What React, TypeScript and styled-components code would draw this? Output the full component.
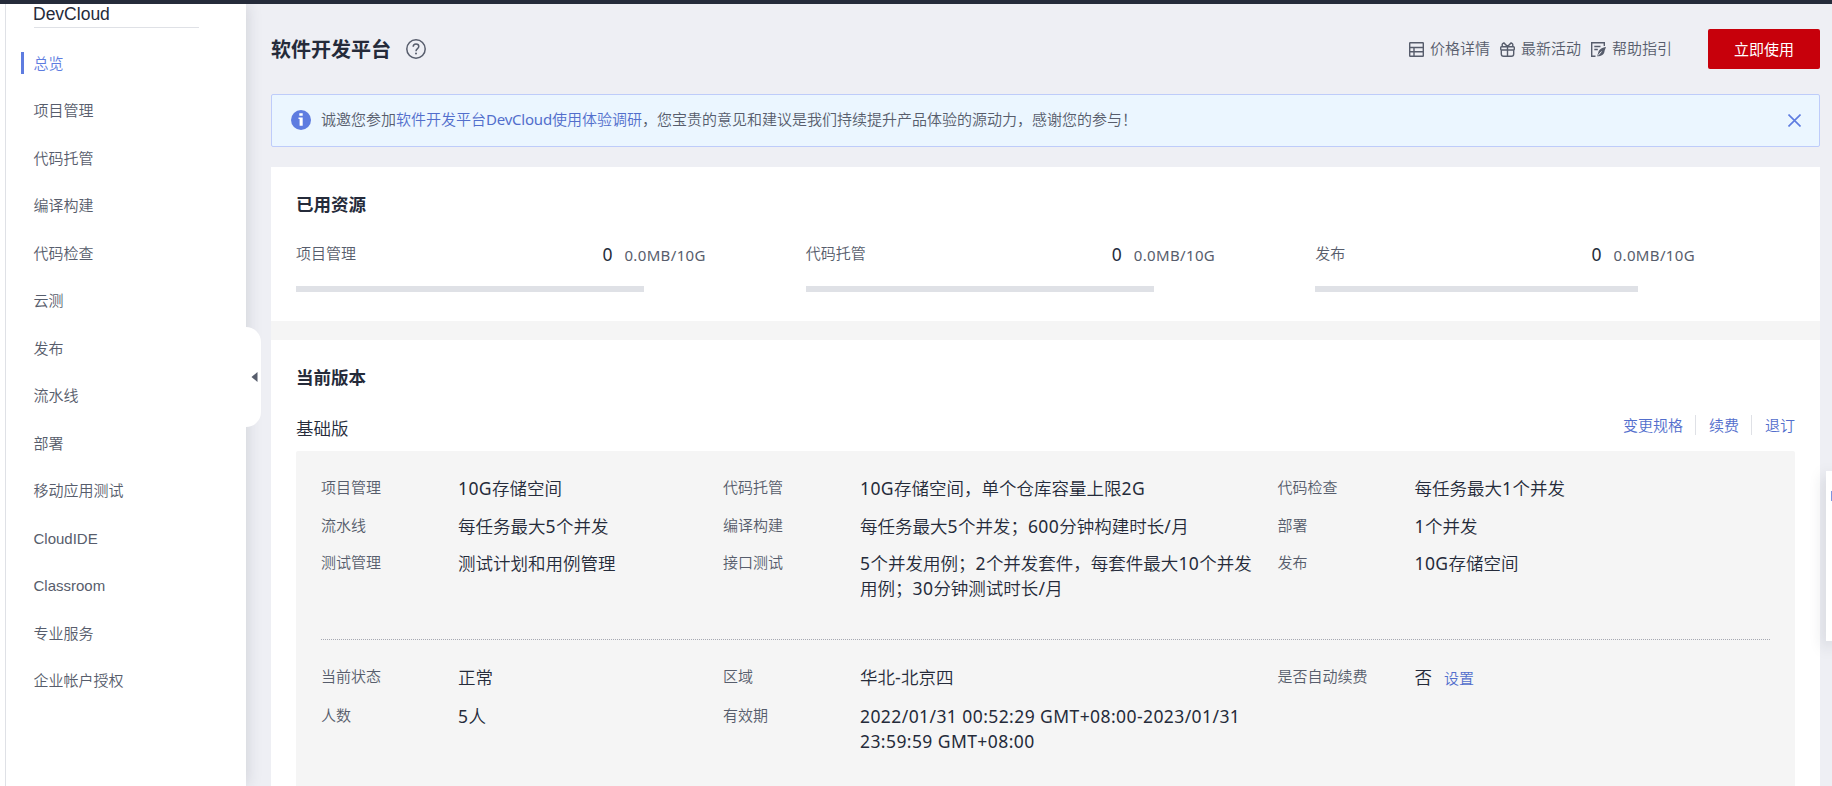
import React from "react";
import styled, { createGlobalStyle } from "styled-components";

const Global = createGlobalStyle`
  * { box-sizing: border-box; }
  html, body { margin: 0; height: 100%; overflow: hidden; }
  body {
    font-family: "Noto Sans", "Noto Sans CJK SC", sans-serif;
    font-size: 15px;
    font-weight: 350;
    color: #575d6c;
    background: #eeeff4;
  }
  ul { list-style: none; margin: 0; padding: 0; }
  h1, h2, h3, p { margin: 0; }
  a { color: #526ecc; text-decoration: none; }
`;

const Page = styled.div`
  height: 786px;
  display: flex;
  border-top: 4px solid #252b3a;
  overflow: hidden;
`;

const Sidebar = styled.nav`
  position: relative;
  z-index: 2;
  width: 246px;
  flex: none;
  background: #fff;
  box-shadow: 0 0 15px rgba(37, 43, 58, 0.17);
  padding-left: 5px;
  font-family: "Liberation Sans", "Noto Sans CJK SC", sans-serif;
`;

const SidebarBody = styled.div`
  height: 100%;
  border-left: 1px solid #dfe1e6;
  padding-left: 15px;
`;

const Brand = styled.div`
  width: 165px;
  height: 24px;
  margin-left: 13px;
  border-bottom: 1px solid #dfe1e6;
  color: #252b3a;
  font-size: 17.5px;
  font-weight: 400;
  line-height: 20px;
  text-indent: -1px;
`;

const Menu = styled.ul`
  padding-top: 11.5px;
`;

const MenuItem = styled.li<{ $active?: boolean; $latin?: boolean }>`
  height: 47.5px;
  display: flex;
  align-items: center;
  gap: 9.5px;
  padding-bottom: ${(p) => (p.$latin ? 0 : 2)}px;
  color: ${(p) => (p.$active ? "#5e7ce0" : "#575d6c")};
  &::before {
    content: "";
    width: 3px;
    height: 22px;
    margin-top: 2px;
    background: ${(p) => (p.$active ? "#5e7ce0" : "transparent")};
  }
`;

const Handle = styled.button`
  position: absolute;
  left: 246px;
  top: 323px;
  width: 15px;
  height: 100px;
  padding: 0 0 0 5px;
  border: 0;
  border-radius: 0 15px 15px 0;
  background: #fff;
  display: flex;
  align-items: center;
`;

const Main = styled.main`
  flex: 1;
  min-width: 0;
  padding: 0 12px 0 25px;
`;

const Header = styled.header`
  height: 90px;
  display: flex;
  align-items: center;
`;

const Title = styled.h1`
  color: #252b3a;
  font-size: 20px;
  font-weight: 700;
  line-height: 30px;
  padding-top: 1px;
  margin-right: 15px;
`;

const HeaderLinks = styled.div`
  margin-left: auto;
  display: flex;
  gap: 10px;
`;

const HeaderLink = styled.span`
  display: flex;
  align-items: center;
  gap: 6px;
  line-height: 22px;
  padding-bottom: 2px;
  svg { position: relative; top: 1px; }
`;

const UseButton = styled.button`
  width: 112px;
  height: 40px;
  margin-left: 36px;
  padding: 0 0 2px;
  border: 0;
  border-radius: 2px;
  background: #c7000b;
  color: #fff;
  font: inherit;
  font-weight: 400;
`;

const Banner = styled.div`
  height: 53px;
  display: flex;
  align-items: center;
  padding: 0 18px 1px 19px;
  border: 1px solid #beccfa;
  border-radius: 2px;
  background: #ebf6ff;
`;

const BannerText = styled.p`
  flex: 1;
  margin-left: 10px;
  line-height: 22px;
  padding-bottom: 2px;
`;

const Section = styled.section<{ $height?: number }>`
  height: ${(p) => (p.$height ? `${p.$height}px` : "auto")};
  background: #fff;
  padding: 24px 25px 0;
`;

const Cards = styled.div`
  margin-top: 20px;
  display: flex;
  flex-direction: column;
  gap: 19px;
  background: #f5f5f5;
`;

const SectionTitle = styled.h2`
  color: #252b3a;
  font-size: 17.5px;
  font-weight: 700;
  line-height: 26px;
`;

const Usages = styled.div`
  margin-top: 23px;
  display: flex;
  gap: 100px;
  padding-right: 100px;
`;

const Usage = styled.div<{ $width: number }>`
  width: ${(p) => p.$width}px;
`;

const UsageRow = styled.div`
  display: flex;
  height: 30px;
  line-height: 30px;
`;

const UsageName = styled.span`
  line-height: 27px;
`;

const UsageCount = styled.span`
  margin-left: auto;
  margin-right: 12px;
  color: #252b3a;
  font-size: 17.5px;
  font-weight: 400;
  line-height: 28px;
`;

const UsageTrack = styled.div`
  width: 85%;
  height: 6px;
  margin-top: 16px;
  background: #dfe1e6;
`;

const PlanRow = styled.div`
  display: flex;
  align-items: center;
  justify-content: space-between;
  margin-top: 23px;
  height: 28px;
`;

const PlanName = styled.h3`
  color: #252b3a;
  font-size: 17.5px;
  font-weight: 350;
`;

const Actions = styled.div`
  display: flex;
  align-items: center;
  line-height: 20px;
  margin-top: -4px;
  a + a {
    margin-left: 12px;
    padding-left: 13px;
    border-left: 1px solid #dfe1e6;
  }
`;

const Panel = styled.div`
  height: 400px;
  margin-top: 10px;
  padding: 24px 25px;
  border-radius: 2px;
  background: #f5f5f5;
`;

const Specs = styled.div`
  display: grid;
  grid-template-columns: 402px 554.5px 1fr;
  row-gap: 12.5px;
`;

const Divider = styled.hr`
  margin: 39px 0 24px;
  border: 0;
  border-top: 1px dotted #a6a9b2;
`;

const Spec = styled.div`
  display: flex;
  line-height: 25px;
`;

const SpecLabel = styled.span`
  width: 137px;
  flex: none;
`;

const SpecValue = styled.span`
  color: #252b3a;
  font-size: 17.5px;
  white-space: pre;
  padding-top: 1px;
  margin-bottom: -1px;
  a { font-size: 15px; margin-left: 12px; }
`;

const LatinText = styled.span<{ $spacing: number }>`
  font-weight: 400;
  letter-spacing: ${(p) => p.$spacing}em;
`;

const FloatingPanel = styled.aside`
  position: absolute;
  z-index: 3;
  left: 1826px;
  top: 471px;
  width: 6px;
  height: 170px;
  background: #fff;
  box-shadow: 0 5px 15px rgba(37, 43, 58, 0.25);
  display: flex;
  padding: 20px 0 0 5px;
`;

const FloatingDot = styled.span`
  width: 1px;
  height: 10px;
  background: #7e95e0;
`;

function Mixed({ text, spacing = 0.024 }: { text: string; spacing?: number }) {
  return (
    <>
      {text.split(/([\x20-\x7e]+)/).map((part, i) =>
        i % 2 ? <LatinText key={i} $spacing={spacing}>{part}</LatinText> : part
      )}
    </>
  );
}

const menu = ["总览", "项目管理", "代码托管", "编译构建", "代码检查", "云测", "发布", "流水线", "部署", "移动应用测试", "CloudIDE", "Classroom", "专业服务", "企业帐户授权"];

const usages = [
  { name: "项目管理", width: 410 },
  { name: "代码托管", width: 409.5 },
  { name: "发布", width: 380 },
];

const capacity = [
  ["项目管理", "10G存储空间"],
  ["代码托管", "10G存储空间，单个仓库容量上限2G"],
  ["代码检查", "每任务最大1个并发"],
  ["流水线", "每任务最大5个并发"],
  ["编译构建", "每任务最大5个并发；600分钟构建时长/月"],
  ["部署", "1个并发"],
  ["测试管理", "测试计划和用例管理"],
  ["接口测试", "5个并发用例；2个并发套件，每套件最大10个并发\n用例；30分钟测试时长/月"],
  ["发布", "10G存储空间"],
];

const status = [
  ["当前状态", "正常"],
  ["区域", "华北-北京四"],
  ["是否自动续费", "否", "设置"],
  ["人数", "5人"],
  ["有效期", "2022/01/31 00:52:29 GMT+08:00-2023/01/31\n23:59:59 GMT+08:00"],
];

const HelpIcon = () => (
  <svg width="20" height="20" viewBox="0 0 20 20" fill="none" stroke="#575d6c" strokeWidth="1.5">
    <circle cx="10" cy="10" r="9.2" />
    <path d="M7.2 7.8C7.2 6 8.4 5 10 5s2.8 1 2.8 2.5c0 2-2.8 2.2-2.8 4.7" />
    <circle cx="10" cy="14.6" r="1" fill="#575d6c" stroke="none" />
  </svg>
);

const PriceIcon = () => (
  <svg width="15" height="15" viewBox="0 0 15 15" fill="none" stroke="#575d6c" strokeWidth="1.4">
    <rect x="0.7" y="0.7" width="13.6" height="13.6" rx="0.5" />
    <path d="M1 5.500h13M1 9.800h13M5 5.500v8.700" />
  </svg>
);

const GiftIcon = () => (
  <svg width="15" height="15" viewBox="0 0 15 15" fill="none" stroke="#575d6c" strokeWidth="1.4">
    <path d="M1.500 4.700h12q.8 0 .8.8v1.700q0 .8-.8.8h-12Q.7 8 .7 7.200V5.500q0-.8.8-.8zM1.300 8v4q0 2.300 2.300 2.300h7.800q2.300 0 2.300-2.300V8M7.500 4.700v9.600" />
    <path d="M7.500 4.500L3.900.9Q1.300 2 2.500 4.500M7.500 4.500L11.100.9Q13.700 2 12.500 4.500" />
  </svg>
);

const GuideIcon = () => (
  <svg width="15" height="15" viewBox="0 0 15 15" fill="none" stroke="#575d6c" strokeWidth="1.4">
    <path d="M4.500 14.300H.7V.7h12.600v3.300M3.300 4.500h6.200M3.300 7.500h3.500" />
    <path d="M15 5c-4.300.6-7.500 2.700-7.800 6l-1.200 3.300c3.700.2 7.500-1.500 7.600-5.500z" fill="#575d6c" stroke="none" />
    <path d="M7 13.500l3.500-4" stroke="#eeeff4" strokeWidth="1" />
  </svg>
);

const InfoIcon = () => (
  <svg width="20" height="20" viewBox="0 0 20 20">
    <circle cx="10" cy="10" r="10" fill="#5e7ce0" />
    <path d="M8.300 3.300h3.400v2.500H8.300zM7.500 7.500h4.200v8.200H8.600V9H7.500z" fill="#fff" />
  </svg>
);

const CloseIcon = () => (
  <svg width="13" height="13" viewBox="0 0 13 13" stroke="#5e7ce0" strokeWidth="1.6">
    <path d="M.5.5l12 12M12.500.5l-12 12" />
  </svg>
);

function SpecGrid({ rows }: { rows: string[][] }) {
  return (
    <Specs>
      {rows.map(([label, value, link]) => (
        <Spec key={label}>
          <SpecLabel>{label}</SpecLabel>
          <SpecValue>
            <Mixed text={value} />
            {link && <a>{link}</a>}
          </SpecValue>
        </Spec>
      ))}
    </Specs>
  );
}

export default function App() {
  return (
    <>
      <Global />
      <Page>
        <Sidebar>
          <SidebarBody>
            <Brand>DevCloud</Brand>
            <Menu>
              {menu.map((name, i) => (
                <MenuItem key={name} $active={i === 0} $latin={/^[A-Z]/.test(name)}>{name}</MenuItem>
              ))}
            </Menu>
          </SidebarBody>
          <Handle>
            <svg width="7" height="10" viewBox="0 0 7 10"><path d="M6.500 0v10L.5 5z" fill="#575d6c" /></svg>
          </Handle>
        </Sidebar>
        <Main>
          <Header>
            <Title>软件开发平台</Title>
            <HelpIcon />
            <HeaderLinks>
              <HeaderLink><PriceIcon />价格详情</HeaderLink>
              <HeaderLink><GiftIcon />最新活动</HeaderLink>
              <HeaderLink><GuideIcon />帮助指引</HeaderLink>
            </HeaderLinks>
            <UseButton>立即使用</UseButton>
          </Header>
          <Banner>
            <InfoIcon />
            <BannerText>
              诚邀您参加<a><Mixed text="软件开发平台DevCloud使用体验调研" spacing={-0.015} /></a>，您宝贵的意见和建议是我们持续提升产品体验的源动力，感谢您的参与！
            </BannerText>
            <CloseIcon />
          </Banner>
          <Cards>
            <Section $height={154}>
              <SectionTitle>已用资源</SectionTitle>
              <Usages>
                {usages.map((u) => (
                  <Usage key={u.name} $width={u.width}>
                    <UsageRow>
                      <UsageName>{u.name}</UsageName>
                      <UsageCount>0</UsageCount>
                      <Mixed text="0.0MB/10G" />
                    </UsageRow>
                    <UsageTrack />
                  </Usage>
                ))}
              </Usages>
            </Section>
            <Section>
              <SectionTitle>当前版本</SectionTitle>
              <PlanRow>
                <PlanName>基础版</PlanName>
                <Actions><a>变更规格</a><a>续费</a><a>退订</a></Actions>
              </PlanRow>
              <Panel>
                <SpecGrid rows={capacity} />
                <Divider />
                <SpecGrid rows={status} />
              </Panel>
            </Section>
          </Cards>
        </Main>
        <FloatingPanel><FloatingDot /></FloatingPanel>
      </Page>
    </>
  );
}
